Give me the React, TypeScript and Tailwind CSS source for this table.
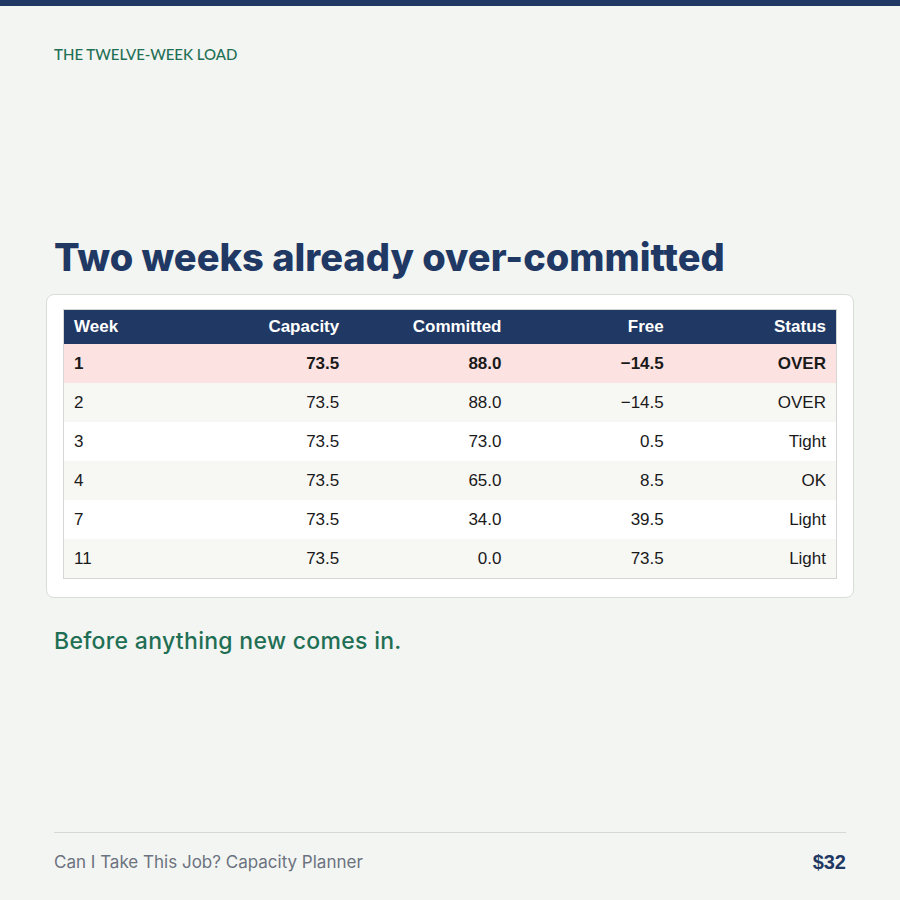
import React from "react";

const rows = [
  { w: "1", c: "73.5", m: "88.0", f: "\u221214.5", s: "OVER", kind: "over" },
  { w: "2", c: "73.5", m: "88.0", f: "\u221214.5", s: "OVER", kind: "alt" },
  { w: "3", c: "73.5", m: "73.0", f: "0.5", s: "Tight", kind: "white" },
  { w: "4", c: "73.5", m: "65.0", f: "8.5", s: "OK", kind: "alt" },
  { w: "7", c: "73.5", m: "34.0", f: "39.5", s: "Light", kind: "white" },
  { w: "11", c: "73.5", m: "0.0", f: "73.5", s: "Light", kind: "alt" },
];

export default function App() {
  return (
    <div className="w-[900px] h-[900px] bg-[#f3f5f2] flex flex-col overflow-hidden">
      <div className="h-[6px] bg-[#1f3864] shrink-0" />
      <div className="flex-1 flex flex-col px-[54px]">
        <div
          className="mt-[39px] text-[15px] leading-[18px] font-medium text-[#1f6f55]"
          style={{ fontFamily: "Lato, 'Noto Sans', sans-serif" }}
        >
          THE TWELVE-WEEK LOAD
        </div>
        <h1
          className="mt-[172px] text-[38px] leading-[44px] font-extrabold text-[#1f3864]"
          style={{ fontFamily: "Inter, 'Noto Sans', sans-serif" }}
        >
          Two weeks already over-committed
        </h1>
        <div className="mt-[15px] -mx-[8px] bg-white border border-[#d9ddd8] rounded-[8px] px-[16px] pt-[14px] pb-[18px]">
          <div
            className="border border-[#d4d7d3] text-[17px] text-[#1a1a1a]"
            style={{ fontFamily: "'Liberation Sans', Arial, sans-serif" }}
          >
            <div className="grid grid-cols-[123px_repeat(4,1fr)] h-[34px] items-center bg-[#1f3864] text-white font-bold">
              <div className="px-[10px]">Week</div>
              <div className="px-[10px] text-right">Capacity</div>
              <div className="px-[10px] text-right">Committed</div>
              <div className="px-[10px] text-right">Free</div>
              <div className="px-[10px] text-right">Status</div>
            </div>
            {rows.map((r) => (
              <div
                key={r.w}
                className={
                  "grid grid-cols-[123px_repeat(4,1fr)] h-[39px] items-center " +
                  (r.kind === "over"
                    ? "bg-[#fde2e2] font-bold"
                    : r.kind === "alt"
                    ? "bg-[#f7f7f4]"
                    : "bg-white")
                }
              >
                <div className="px-[10px]">{r.w}</div>
                <div className="px-[10px] text-right">{r.c}</div>
                <div className="px-[10px] text-right">{r.m}</div>
                <div className="px-[10px] text-right">{r.f}</div>
                <div className="px-[10px] text-right">{r.s}</div>
              </div>
            ))}
          </div>
        </div>
        <div
          className="mt-[27px] text-[23px] leading-[32px] font-medium text-[#1f6f55] tracking-[0.3px]"
          style={{ fontFamily: "Inter, 'Noto Sans', sans-serif" }}
        >
          Before anything new comes in.
        </div>
        <div className="mt-auto mb-[23px] border-t border-[#d5d8d5] pt-[14px] flex items-center justify-between h-[45px]">
          <div
            className="text-[17px] leading-[30px] text-[#6b7280]"
            style={{ fontFamily: "Inter, 'Noto Sans', sans-serif" }}
          >
            Can I Take This Job? Capacity Planner
          </div>
          <div
            className="text-[20px] leading-[30px] font-bold text-[#1f3864]"
            style={{ fontFamily: "'Liberation Sans', Arial, sans-serif" }}
          >
            $32
          </div>
        </div>
      </div>
    </div>
  );
}
